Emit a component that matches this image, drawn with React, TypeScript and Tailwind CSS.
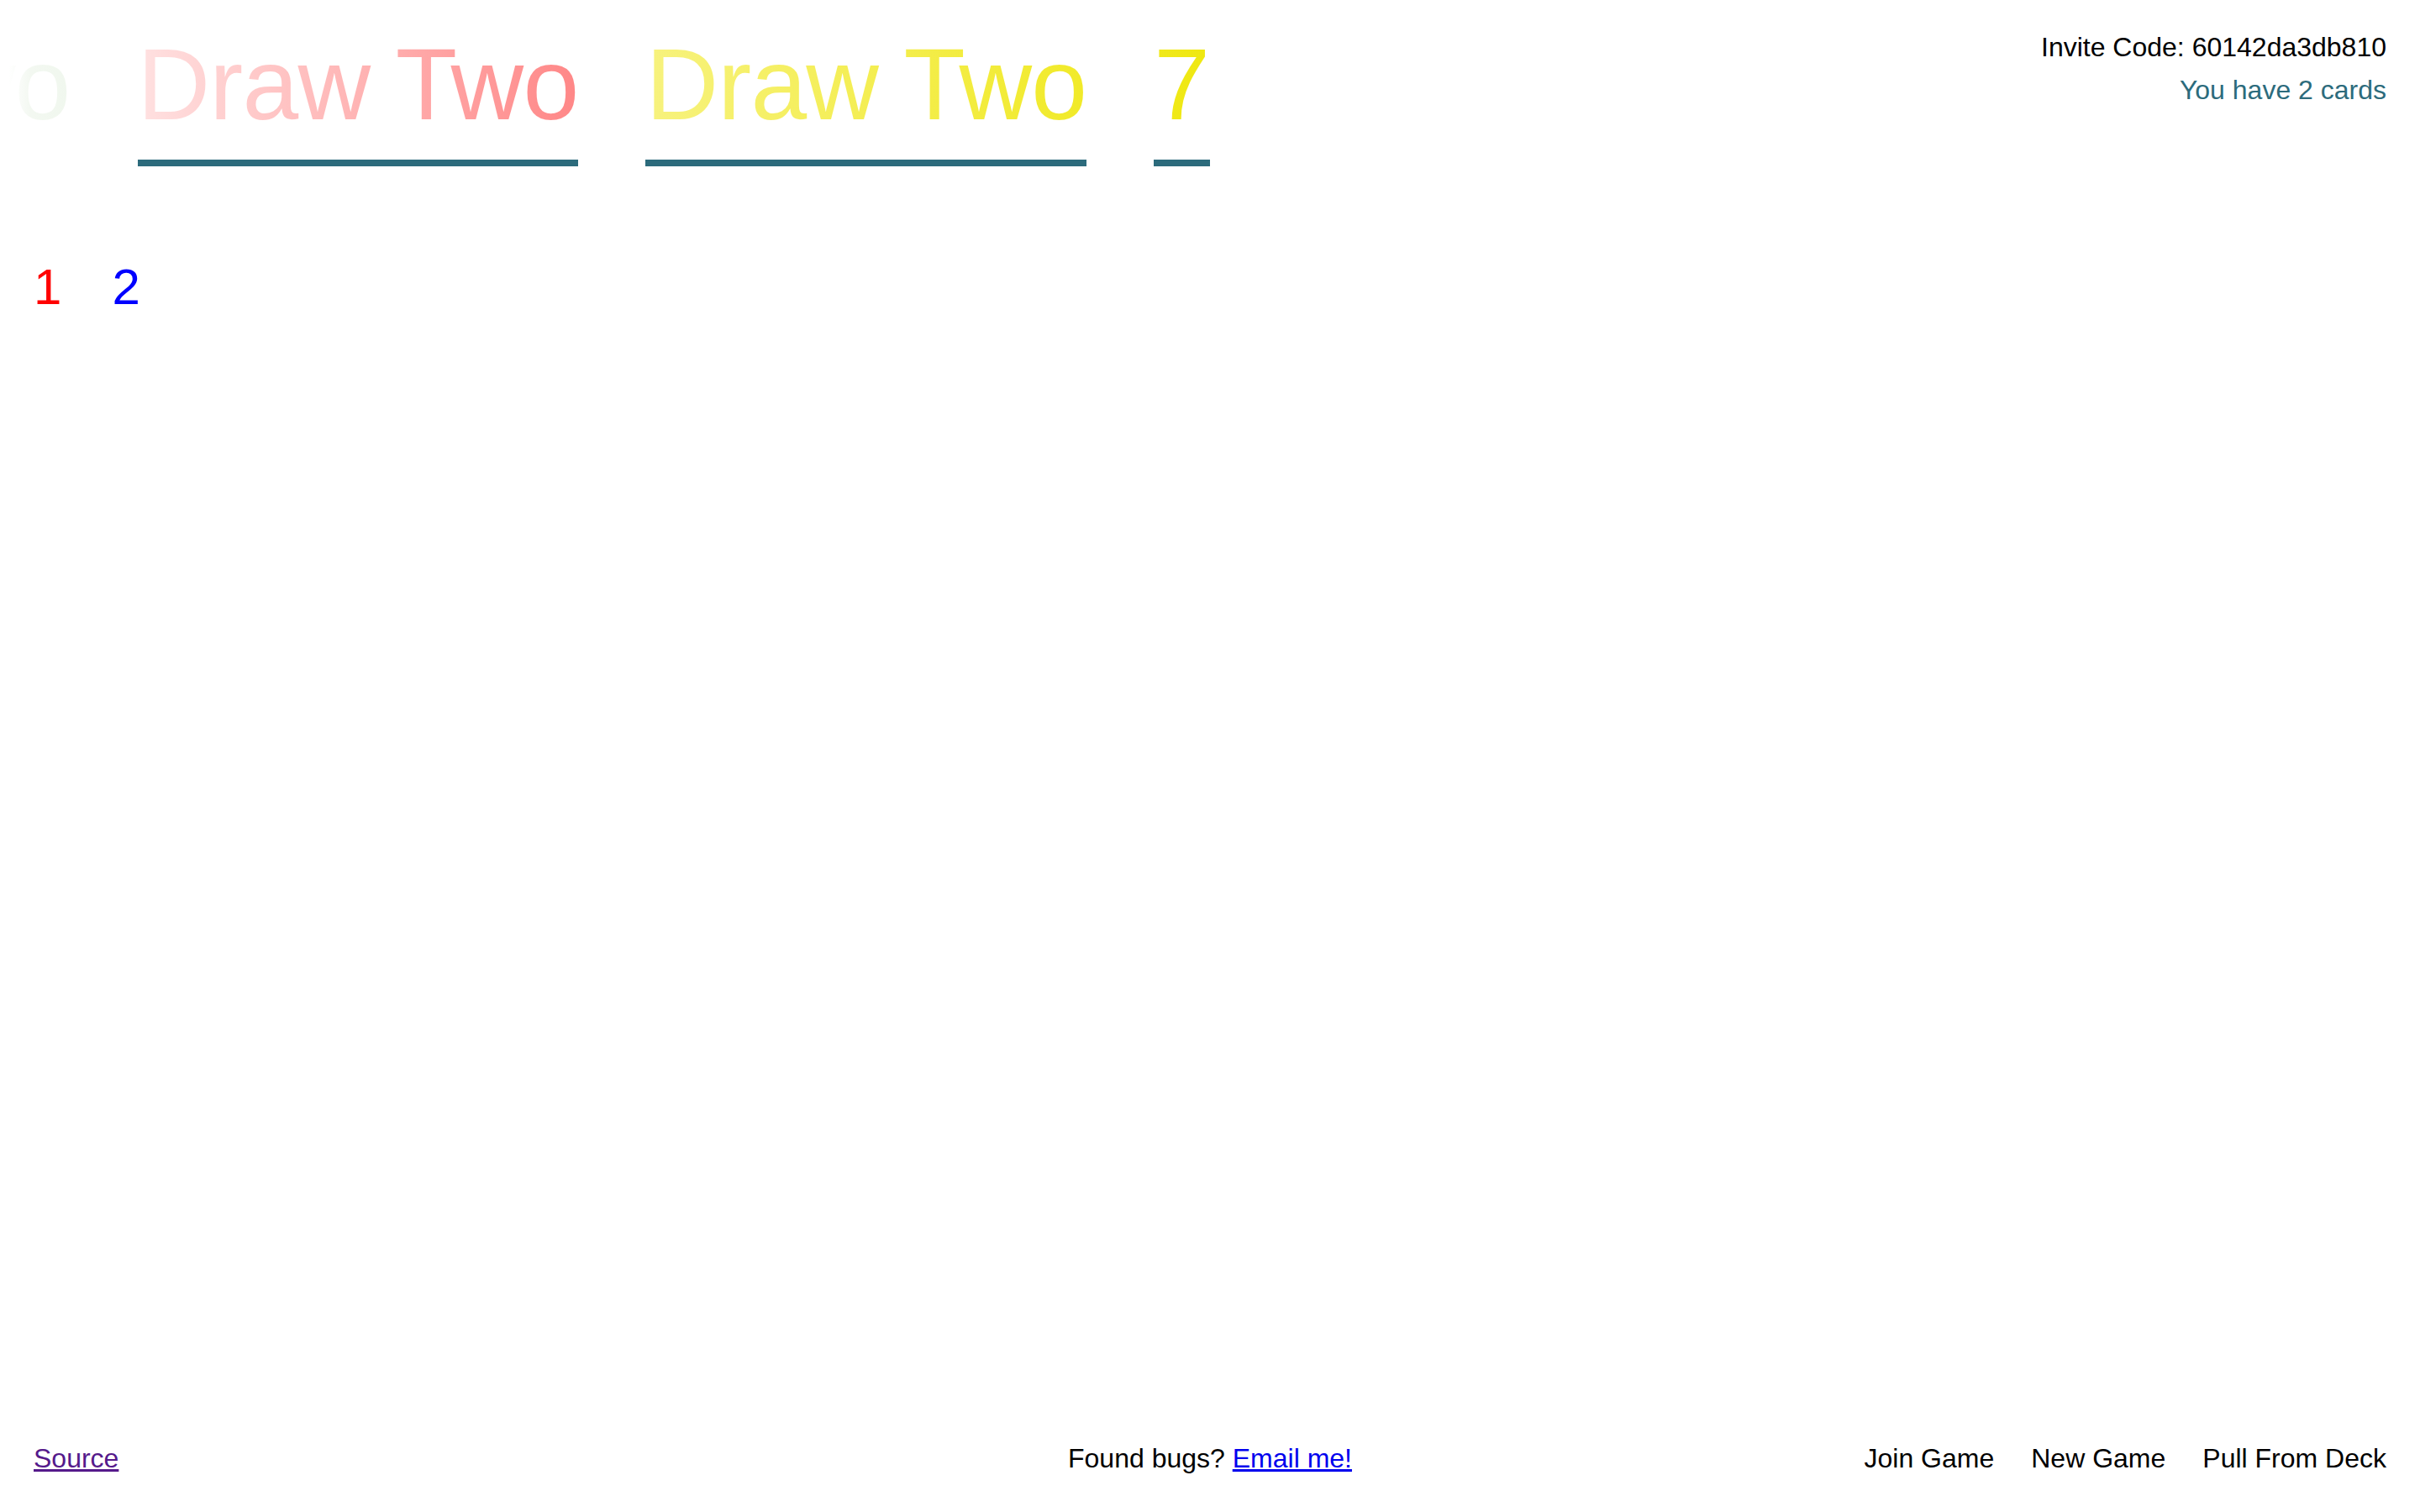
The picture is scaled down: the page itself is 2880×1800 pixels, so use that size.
import React from "react";

type Card = { label: string; gradient: string; bar: boolean; tight: boolean };

const cards: Card[] = [
  { label: "Draw Two", gradient: "bg-[linear-gradient(to_right,#ffffff_86%,#f3f8f1_91%,#f0f7ee)]", bar: false, tight: true },
  { label: "Draw Two", gradient: "bg-[linear-gradient(to_right,#ffe1e1,#ff8787)]", bar: true, tight: true },
  { label: "Draw Two", gradient: "bg-[linear-gradient(to_right,#f7f27e,#f1ea28)]", bar: true, tight: true },
  { label: "7", gradient: "bg-[linear-gradient(to_right,#f0e91b,#efe810)]", bar: true, tight: false },
];

export default function App() {
  return (
    <div className="h-screen w-full bg-white text-black font-['Liberation_Sans',Arial,sans-serif] flex flex-col overflow-hidden">
      <main className="flex-1 flex flex-col">
        <div className="flex justify-between items-start">
          <div className="w-[1480px] overflow-hidden flex justify-end pt-10">
            {cards.map((c, i) => (
              <div key={i} className="shrink-0 mx-10 flex flex-col">
                <span
                  className={`whitespace-nowrap text-[120px] leading-[120px] bg-clip-text text-transparent ${c.gradient} ${c.tight ? "tracking-[-0.8px]" : ""}`}
                >
                  {c.label}
                </span>
                <div className={`mt-[30px] h-2 w-full ${c.bar ? "bg-[#2c6b7c]" : "bg-transparent"}`} />
              </div>
            ))}
          </div>
          <div className="pt-[38px] pr-10 flex flex-col items-end text-[32px] leading-[36px]">
            <div className="whitespace-nowrap">Invite Code: 60142da3db810</div>
            <div className="mt-[15px] whitespace-nowrap text-[#2c6b7c]">You have 2 cards</div>
          </div>
        </div>
        <div className="mt-[114px] pl-10 flex gap-[60px] text-[60px] leading-[60px]">
          <span className="text-[#ff0000]">1</span>
          <span className="text-[#0000ff]">2</span>
        </div>
      </main>
      <footer className="grid grid-cols-3 items-center px-10 pb-[46px] text-[32px] leading-[36px]">
        <div>
          <a href="#" className="text-[#551a8b] underline">Source</a>
        </div>
        <div className="text-center whitespace-nowrap">
          Found bugs? <a href="#" className="text-[#0000ee] underline">Email me!</a>
        </div>
        <div className="flex justify-end gap-[44px] whitespace-nowrap">
          <span>Join Game</span>
          <span>New Game</span>
          <span>Pull From Deck</span>
        </div>
      </footer>
    </div>
  );
}
